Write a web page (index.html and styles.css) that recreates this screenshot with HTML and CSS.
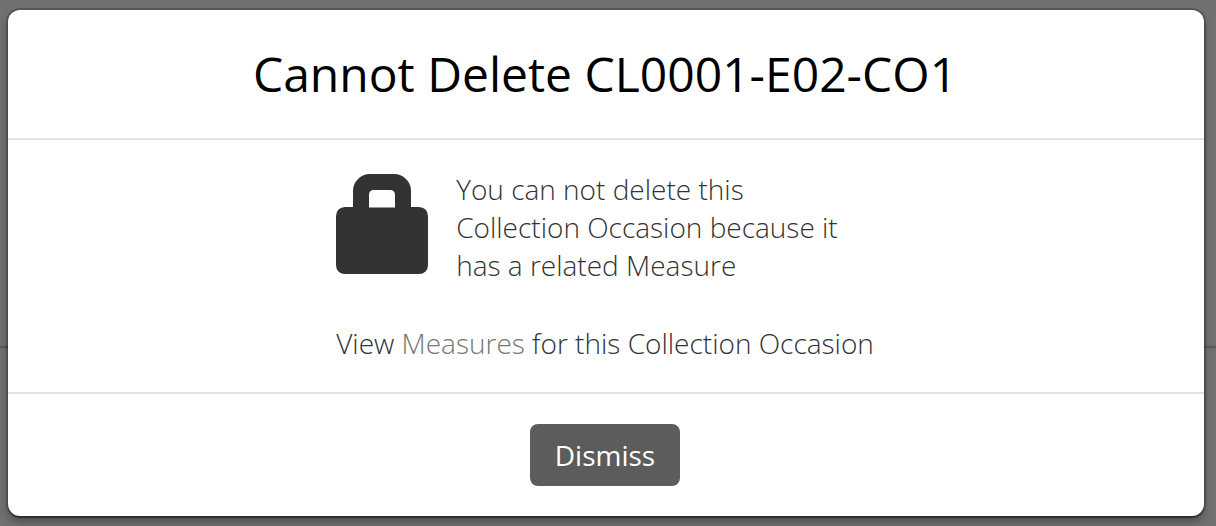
FILE: index.html
```html
<!DOCTYPE html>
<html lang="en">
<head>
<meta charset="utf-8">
<meta name="viewport" content="width=device-width, initial-scale=1">
<title>Cannot Delete CL0001-E02-CO1</title>
<link rel="stylesheet" href="styles.css">
</head>
<body>
<div class="backdrop-rule"></div>
<section class="modal" role="dialog" aria-labelledby="modal-title">
  <header class="modal-header"><h1 class="modal-title" id="modal-title">Cannot Delete CL0001-E02-CO1</h1></header>
  <div class="modal-body">
    <div class="message">
      <div class="reason">
        <svg class="lock" viewBox="0 0 92 100" aria-hidden="true"><path fill="#333" fill-rule="evenodd" d="M17 33V17Q17 10 22 5Q27 0 34 0H58Q65 0 70 5Q75 10 75 17V33H83Q87 33 89.500 35.500Q92 38 92 42V91Q92 95 89.500 97.500Q87 100 83 100H9Q5 100 2.500 97.500Q0 95 0 91V42Q0 38 2.500 35.500Q5 33 9 33ZM33 33.500H59V21Q59 16 54 16H38Q33 16 33 21Z"/></svg>
        <p class="text reason-text">You can not delete this Collection Occasion because it has a related Measure</p>
      </div>
      <p class="text">View <a class="link" href="#measures">Measures</a> for this Collection Occasion</p>
    </div>
  </div>
  <footer class="modal-footer"><button class="dismiss" type="button">Dismiss</button></footer>
</section>
</body>
</html>
```
FILE: styles.css
```css
* { box-sizing: border-box; }
body {
  margin: 0;
  padding: 10px 12px 10px 8px;
  background: #717171;
  font-family: "Open Sans", "Noto Sans", sans-serif;
}
/* Divider of the dimmed page, seen on both sides of the dialog */
.backdrop-rule {
  position: absolute;
  top: 346px;
  left: 0;
  right: 0;
  height: 2px;
  background: #5a5a5a;
}
.modal {
  position: relative;
  background: #fff;
  border-radius: 12px;
  box-shadow: 0 0 0 2px rgba(0, 0, 0, 0.2), 0 2px 1px rgba(0, 0, 0, 0.3), 0 6px 10px rgba(0, 0, 0, 0.3);
}
.modal-header {
  padding: 32px 26px 32px 24px;
  border-bottom: 2px solid #e3e3e3;
  text-align: center;
}
.modal-title {
  margin: 0;
  font-size: 48px;
  font-weight: 400;
  line-height: 64px;
  color: #000;
}
.modal-body {
  display: flex;
  justify-content: center;
  padding: 30px 26px 30px 24px;
}
.message {
  max-width: 538px;
}
.reason {
  display: flex;
  align-items: flex-start;
  gap: 28px;
  margin-bottom: 40px;
}
.reason-text {
  max-width: 400px;
}
.lock {
  flex: none;
  width: 92px;
  margin-top: 4px;
}
.text {
  margin: 0;
  font-size: 28px;
  font-weight: 300;
  line-height: 38px;
  color: #333;
}
.link {
  color: #777;
  text-decoration: none;
}
.modal-footer {
  padding: 30px 26px 30px 24px;
  border-top: 2px solid #e3e3e3;
  text-align: center;
}
.dismiss {
  height: 62px;
  padding: 0 25px;
  border: 0;
  border-radius: 8px;
  background: #5c5c5c;
  color: #fff;
  font: 400 28px "Open Sans", "Noto Sans", sans-serif;
}
```
